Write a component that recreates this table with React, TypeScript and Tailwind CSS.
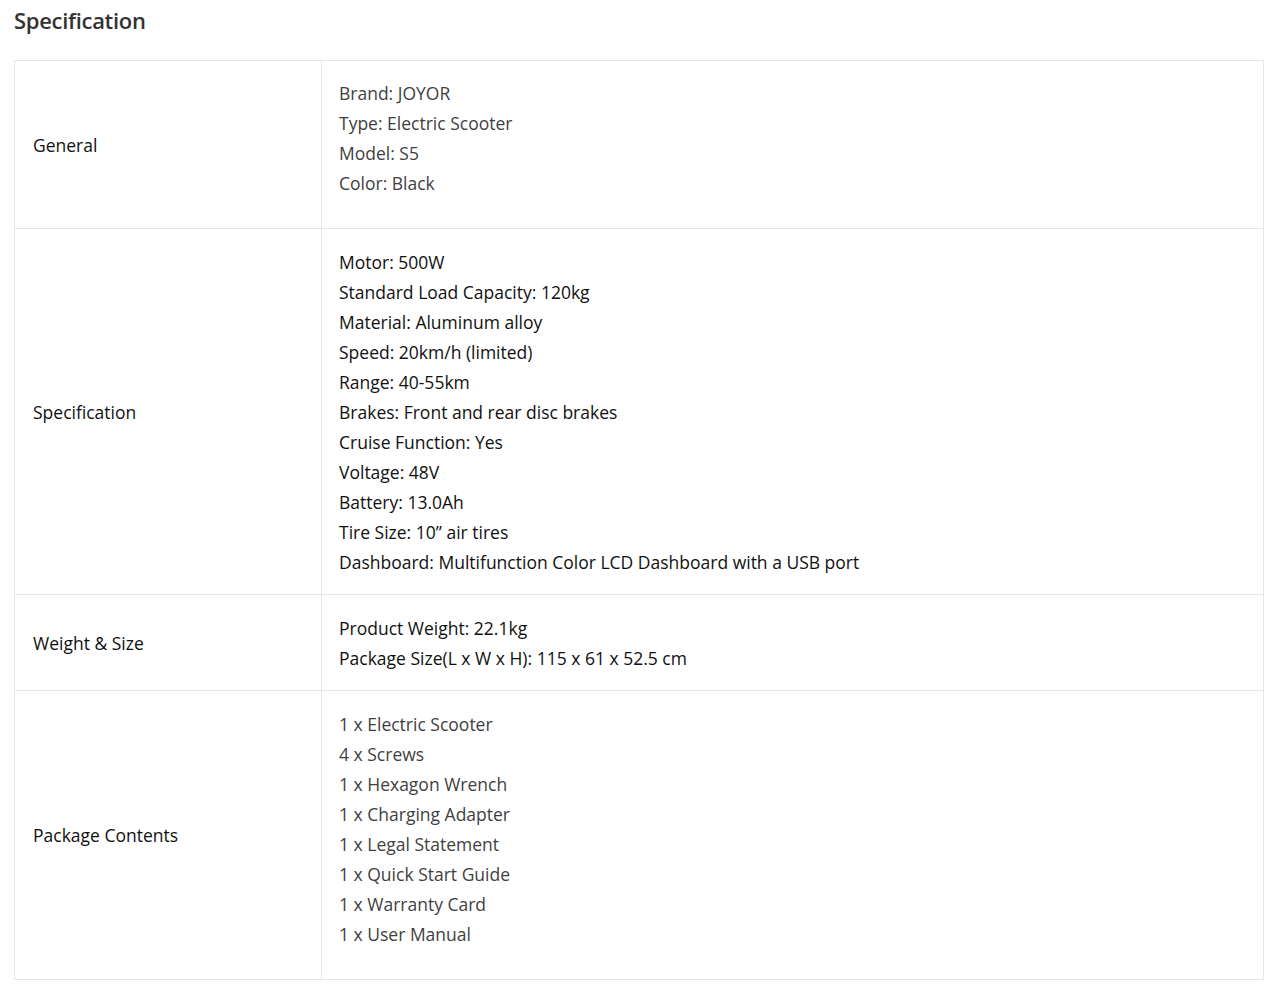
const rows = [
  {
    label: 'General',
    tone: 'text-[#3f3f3f]',
    pad: 'pt-[17px] pb-[30px]',
    items: ['Brand: JOYOR', 'Type: Electric Scooter', 'Model: S5', 'Color: Black'],
  },
  {
    label: 'Specification',
    tone: 'text-[#111]',
    pad: 'pt-[18px] pb-[17px]',
    items: [
      'Motor: 500W',
      'Standard Load Capacity: 120kg',
      'Material: Aluminum alloy',
      'Speed: 20km/h (limited)',
      'Range: 40-55km',
      'Brakes: Front and rear disc brakes',
      'Cruise Function: Yes',
      'Voltage: 48V',
      'Battery: 13.0Ah',
      'Tire Size: 10” air tires',
      'Dashboard: Multifunction Color LCD Dashboard with a USB port',
    ],
  },
  {
    label: 'Weight & Size',
    tone: 'text-[#111]',
    pad: 'pt-[18px] pb-[17px]',
    items: ['Product Weight: 22.1kg', 'Package Size(L x W x H): 115 x 61 x 52.5 cm'],
  },
  {
    label: 'Package Contents',
    tone: 'text-[#3f3f3f]',
    pad: 'pt-[18px] pb-[30px]',
    items: [
      '1 x Electric Scooter',
      '4 x Screws',
      '1 x Hexagon Wrench',
      '1 x Charging Adapter',
      '1 x Legal Statement',
      '1 x Quick Start Guide',
      '1 x Warranty Card',
      '1 x User Manual',
    ],
  },
];

export default function App() {
  return (
    <div className="min-h-screen bg-white font-['Open_Sans',sans-serif] px-[14px]">
      <h2 className="pt-[5px] h-[60px] text-[22px] leading-[30px] font-semibold text-[#333] tracking-[-0.3px]">
        Specification
      </h2>
      <table className="w-[1250px] border-collapse border border-[#e6e6e6]">
        <tbody>
          {rows.map((row) => (
            <tr key={row.label} className="border-b border-[#e6e6e6]">
              <td className="w-[307px] border-r border-[#e6e6e6] pl-[18px] align-middle text-[17.5px] leading-[30px] text-[#111]">
                {row.label}
              </td>
              <td className={`pl-[17px] ${row.pad} align-top text-[17.5px] leading-[30px] ${row.tone}`}>
                {row.items.map((item) => (
                  <div key={item}>{item}</div>
                ))}
              </td>
            </tr>
          ))}
        </tbody>
      </table>
    </div>
  );
}
